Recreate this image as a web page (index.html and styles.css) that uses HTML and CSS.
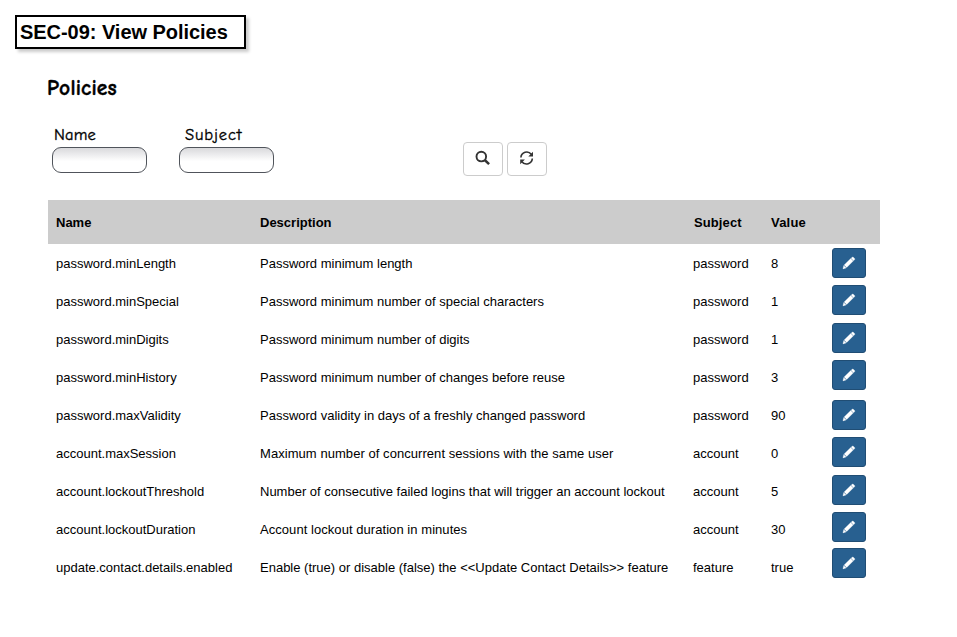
FILE: index.html
```html
<!DOCTYPE html>
<html lang="en">
<head>
<meta charset="utf-8">
<title>SEC-09: View Policies</title>
<link rel="stylesheet" href="styles.css">
</head>
<body>
<svg class="defs" width="0" height="0">
  <symbol id="pencil" viewBox="0 0 14 14"><path d="M10.1 1.2Q10.7.7 11.3 1.2L12.6 2.5Q13.1 3.1 12.6 3.7L11.6 4.7 9.1 2.2ZM8.7 2.6 11.2 5.1 4.7 11.6 2.1 9ZM1.7 9.5 4.2 12 .9 12.9Z" fill="#fff" stroke="#fff" stroke-width=".25"/></symbol>
</svg>
<h1 class="title">SEC-09: View Policies</h1>
<main class="page">
  <h2 class="heading">Policies</h2>
  <form class="filters">
    <label class="field">Name<input class="input" type="text"></label>
    <label class="field subject"><span class="caption">Subject</span><input class="input" type="text"></label>
    <div class="actions">
      <button class="tool" type="button" aria-label="Search"><svg width="16" height="16" viewBox="0 0 16 16" fill="none" stroke="#333"><circle cx="6.3" cy="6.6" r="4.8" stroke-width="1.9"/><path d="M9.7 10 14.1 14.1" stroke-width="2.5"/></svg></button>
      <button class="tool" type="button" aria-label="Refresh"><svg width="16" height="16" viewBox="0 0 16 16"><g fill="none" stroke="#333" stroke-width="1.6"><path d="M1.9 7.5A5.8 5.8 0 0 1 12.3 4.3"/><path d="M13.3 8.5A5.8 5.8 0 0 1 2.9 11.7"/></g><path d="M14 1.7V6.4H9.3ZM1.2 14.3V9.6H5.9Z" fill="#333"/></svg></button>
    </div>
  </form>
  <section class="policies">
    <table class="table">
      <colgroup><col class="c-name"><col class="c-desc"><col class="c-subject"><col class="c-value"></colgroup>
      <thead><tr><th>Name</th><th>Description</th><th>Subject</th><th>Value</th></tr></thead>
      <tbody>
        <tr><td>password.minLength</td><td>Password minimum length</td><td>password</td><td>8</td></tr>
        <tr><td>password.minSpecial</td><td>Password minimum number of special characters</td><td>password</td><td>1</td></tr>
        <tr><td>password.minDigits</td><td>Password minimum number of digits</td><td>password</td><td>1</td></tr>
        <tr><td>password.minHistory</td><td>Password minimum number of changes before reuse</td><td>password</td><td>3</td></tr>
        <tr><td>password.maxValidity</td><td>Password validity in days of a freshly changed password</td><td>password</td><td>90</td></tr>
        <tr><td>account.maxSession</td><td class="wide">Maximum number of concurrent sessions with the same user</td><td>account</td><td>0</td></tr>
        <tr><td>account.lockoutThreshold</td><td>Number of consecutive failed logins that will trigger an account lockout</td><td>account</td><td>5</td></tr>
        <tr><td>account.lockoutDuration</td><td class="wide">Account lockout duration in minutes</td><td>account</td><td>30</td></tr>
        <tr><td>update.contact.details.enabled</td><td>Enable (true) or disable (false) the &lt;&lt;Update Contact Details&gt;&gt; feature</td><td>feature</td><td>true</td></tr>
      </tbody>
    </table>
    <div class="edits">
      <button class="edit" aria-label="Edit"><svg width="14" height="14"><use href="#pencil"/></svg></button>
      <button class="edit" aria-label="Edit"><svg width="14" height="14"><use href="#pencil"/></svg></button>
      <button class="edit" aria-label="Edit"><svg width="14" height="14"><use href="#pencil"/></svg></button>
      <button class="edit" aria-label="Edit"><svg width="14" height="14"><use href="#pencil"/></svg></button>
      <button class="edit" aria-label="Edit"><svg width="14" height="14"><use href="#pencil"/></svg></button>
      <button class="edit" aria-label="Edit"><svg width="14" height="14"><use href="#pencil"/></svg></button>
      <button class="edit" aria-label="Edit"><svg width="14" height="14"><use href="#pencil"/></svg></button>
      <button class="edit" aria-label="Edit"><svg width="14" height="14"><use href="#pencil"/></svg></button>
      <button class="edit" aria-label="Edit"><svg width="14" height="14"><use href="#pencil"/></svg></button>
    </div>
  </section>
</main>
</body>
</html>
```
FILE: styles.css
```css
* { box-sizing: border-box; }
body { margin: 0; padding: 15px 0 0 15px; background: #fff; color: #000; font: 13px "Liberation Sans", Arial, sans-serif; }
.defs { display: none; }
.title { width: 231px; height: 34px; margin: 0; padding-left: 3px; border: 2px solid #000; background: #fff; box-shadow: 3px 3px 3px #ccc; font-size: 20px; line-height: 30px; letter-spacing: -.04px; white-space: nowrap; }
.page { width: 832px; margin-left: 33px; }
.heading { height: 52px; margin: 25px 0 0 -1px; font: bold 21.5px/29px "Comic Sans MS", "Comic Neue", Lato, sans-serif; letter-spacing: .2px; -webkit-text-stroke: .4px #000; }
.filters { display: flex; height: 74px; margin: 0; padding-left: 4px; }
.field { width: 127px; margin-top: -1px; padding: 0 0 0 2px; font: 16.5px/19px "Comic Sans MS", "Comic Neue", Lato, sans-serif; letter-spacing: .2px; -webkit-text-stroke: .35px #000; }
.caption { display: block; padding-left: 4px; letter-spacing: .9px; }
.input { display: block; width: 95px; height: 26px; margin: 3px 0 0 -2px; padding: 0 6px; border: 1px solid #50545b; border-radius: 9px; background: linear-gradient(#d9d9dc, #fff 55%); }
.actions { display: flex; gap: 4px; margin: 16px 0 0 157px; }
.tool { display: grid; place-items: center; width: 40px; height: 34px; padding: 0 0 2px; border: 1px solid #ccc; border-radius: 4px; background: #fff; }
.policies { display: flex; background: linear-gradient(#ccc 44px, transparent 44px); }
.table { width: 784px; table-layout: fixed; border-collapse: collapse; }
.c-name { width: 204px; }
.c-desc { width: 433px; }
.c-subject { width: 78px; }
.c-value { width: 69px; }
th, td { padding: 0 0 0 8px; text-align: left; white-space: nowrap; }
th { height: 44px; }
th:nth-child(3) { padding-left: 9px; letter-spacing: .1px; }
th:nth-child(4) { letter-spacing: .2px; }
td { height: 38px; }
.wide { letter-spacing: .055px; }
.edits { display: flex; flex-direction: column; gap: 7px; padding-top: 48px; }
.edit { display: grid; place-items: center; width: 34px; height: 30px; padding: 0; border: 1px solid #204d74; border-radius: 3px; background: #286090; }
.edit:nth-child(3), .edit:nth-child(7) { margin-top: 1px; }
.edit:nth-child(5) { margin-top: 3px; }
.edit:nth-child(9) { margin-top: -1px; }
```
